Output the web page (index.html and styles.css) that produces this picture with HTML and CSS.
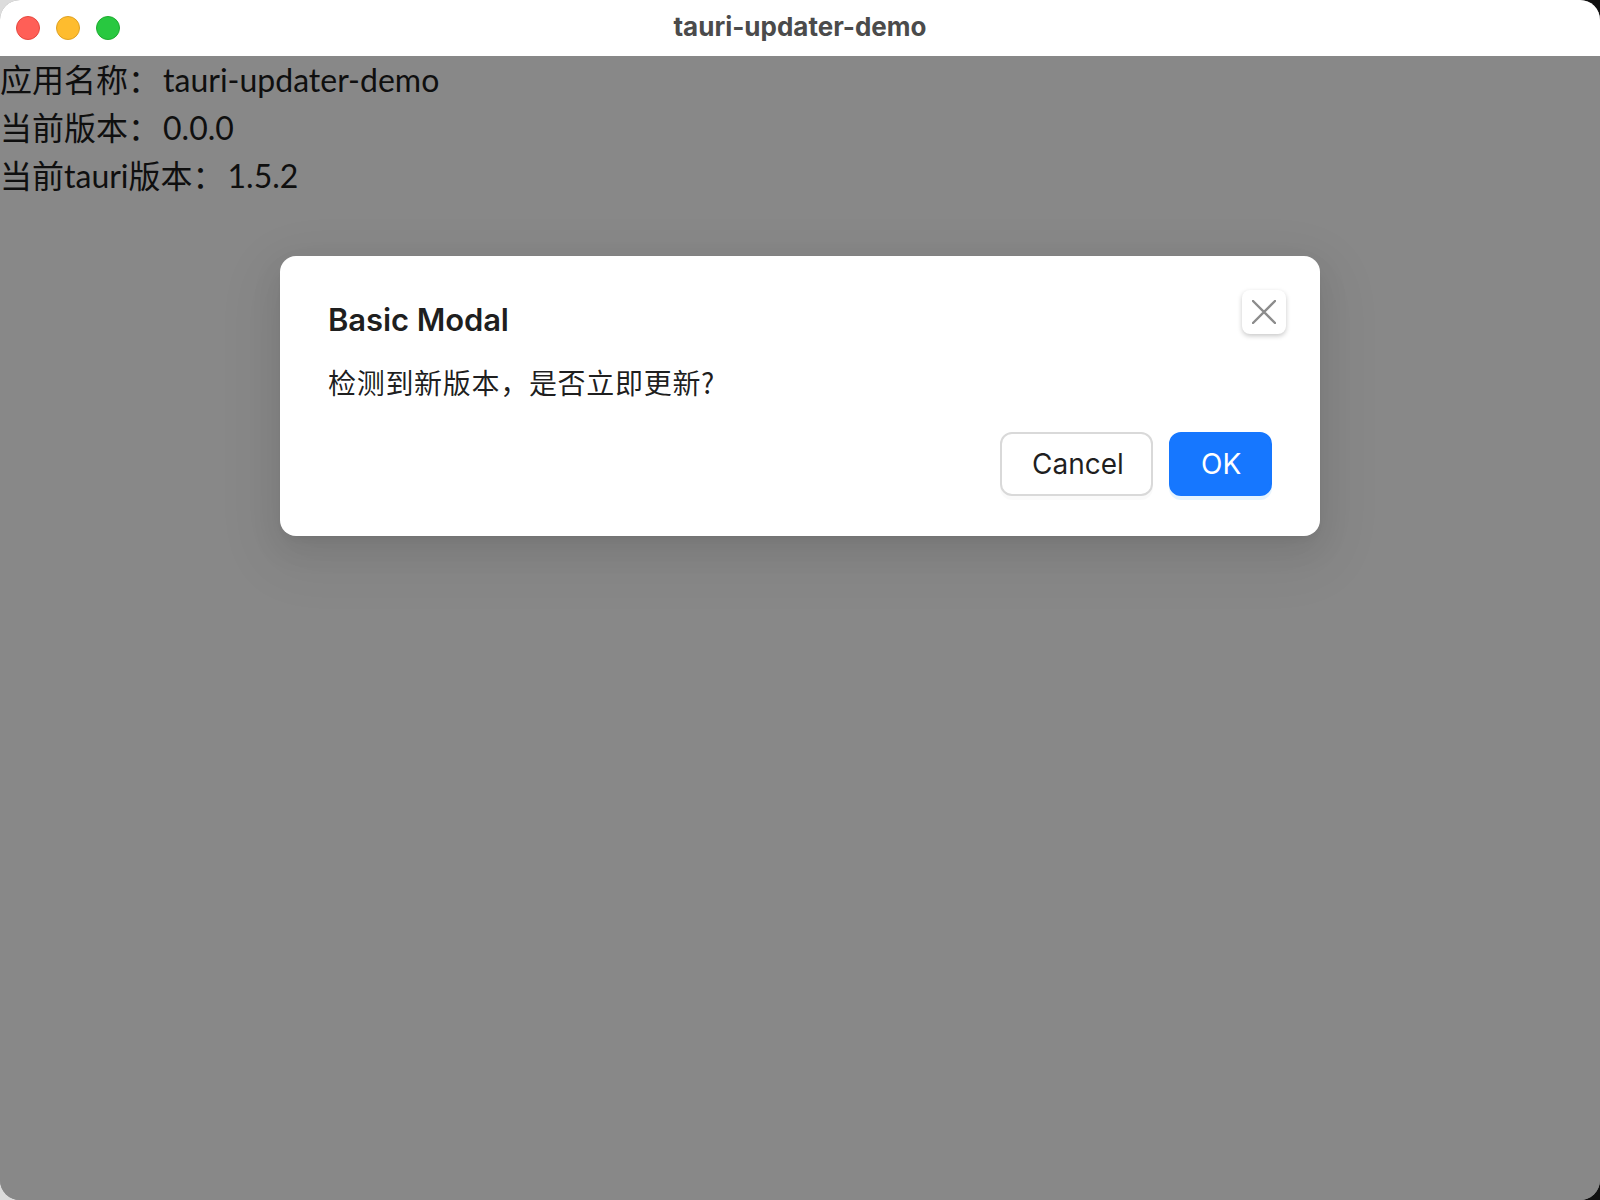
FILE: index.html
```html
<!DOCTYPE html>
<html lang="zh-CN">
<head>
<meta charset="utf-8">
<title>tauri-updater-demo</title>
<link rel="stylesheet" href="styles.css">
</head>
<body>
<div class="window">
  <header class="titlebar">
    <div class="lights">
      <span class="light red"></span>
      <span class="light yellow"></span>
      <span class="light green"></span>
    </div>
    <div class="wintitle">tauri-updater-demo</div>
  </header>
  <main class="content">
    <p class="info">应用名称：<span class="val">tauri-updater-demo</span></p>
    <p class="info">当前版本：<span class="val">0.0.0</span></p>
    <p class="info">当前tauri版本：<span class="val">1.5.2</span></p>
    <div class="mask">
      <div class="modal">
        <button class="close" aria-label="Close">
          <svg viewBox="0 0 24 24" width="24" height="24"><path d="M1 1 L23 23 M23 1 L1 23" stroke="#8c8c8c" stroke-width="2.4" stroke-linecap="round" fill="none"/></svg>
        </button>
        <div class="modal-title">Basic Modal</div>
        <div class="modal-body">检测到新版本，是否立即更新?</div>
        <div class="modal-footer">
          <button class="btn btn-default">Cancel</button>
          <button class="btn btn-primary">OK</button>
        </div>
      </div>
    </div>
  </main>
</div>
</body>
</html>
```

FILE: styles.css
```css
html, body {
  margin: 0;
  padding: 0;
  width: 1600px;
  height: 1200px;
  overflow: hidden;
}
body {
  background: linear-gradient(to right, #dcdcdc 50%, #111 50%);
}
.window {
  width: 1600px;
  height: 1200px;
  border-radius: 20px;
  overflow: hidden;
  display: flex;
  flex-direction: column;
  background: #888888;
}
.titlebar {
  height: 56px;
  flex: none;
  background: #ffffff;
  display: flex;
  align-items: center;
  position: relative;
}
.lights {
  display: flex;
  gap: 16px;
  padding-left: 16px;
}
.light {
  width: 22px;
  height: 22px;
  border-radius: 50%;
  display: block;
}
.red { background: #ff5f57; border: 1px solid #e5483f; }
.yellow { background: #febc2e; border: 1px solid #dea123; }
.green { background: #28c840; border: 1px solid #1dab2f; }
.wintitle {
  position: absolute;
  left: 0;
  right: 0;
  top: 0;
  height: 56px;
  line-height: 54px;
  text-align: center;
  font-family: Inter, "Liberation Sans", sans-serif;
  font-weight: 700;
  font-size: 26px;
  color: #4b4b4b;
  pointer-events: none;
}
.content {
  flex: 1;
  position: relative;
  background: #888888;
}
.info {
  margin: 0;
  font-family: Lato, "Noto Sans CJK SC", sans-serif;
  font-size: 32px;
  line-height: 48px;
  color: #0f0f0f;
}
.val {
  padding-left: 3px;
}
.mask {
  position: absolute;
  inset: 0;
  display: flex;
  justify-content: center;
  align-items: flex-start;
  padding-top: 200px;
}
.modal {
  position: relative;
  width: 1040px;
  box-sizing: border-box;
  background: #ffffff;
  border-radius: 16px;
  padding: 40px 48px 40px;
  box-shadow: 0 12px 32px 0 rgba(0,0,0,0.08), 0 6px 12px -8px rgba(0,0,0,0.12), 0 18px 56px 16px rgba(0,0,0,0.05);
  font-family: Inter, "Noto Sans CJK SC", sans-serif;
}
.close {
  position: absolute;
  top: 34px;
  right: 34px;
  width: 44px;
  height: 44px;
  padding: 0;
  border: none;
  border-radius: 8px;
  background: #ffffff;
  box-shadow: 0 2px 5px rgba(0,0,0,0.22);
  display: flex;
  align-items: center;
  justify-content: center;
}
.modal-title {
  font-size: 31px;
  font-weight: 600;
  line-height: 48px;
  color: rgba(0,0,0,0.88);
  margin-bottom: 16px;
  letter-spacing: -0.1px;
}
.modal-body {
  font-family: "Noto Sans CJK SC", sans-serif;
  font-size: 28px;
  line-height: 44px;
  color: rgba(0,0,0,0.88);
  letter-spacing: 0.7px;
}
.modal-footer {
  margin-top: 28px;
  display: flex;
  justify-content: flex-end;
  gap: 16px;
}
.btn {
  height: 64px;
  padding: 0 30px;
  border-radius: 12px;
  font-family: Inter, "Liberation Sans", sans-serif;
  font-size: 28px;
  line-height: 60px;
  box-sizing: border-box;
  cursor: pointer;
}
.btn-default {
  width: 153px;
  background: #ffffff;
  border: 2px solid #d9d9d9;
  color: rgba(0,0,0,0.88);
  box-shadow: 0 4px 0 rgba(0,0,0,0.02);
}
.btn-primary {
  width: 103px;
  background: #1677ff;
  border: 2px solid #1677ff;
  color: #ffffff;
  box-shadow: 0 4px 0 rgba(5,145,255,0.1);
}
```
